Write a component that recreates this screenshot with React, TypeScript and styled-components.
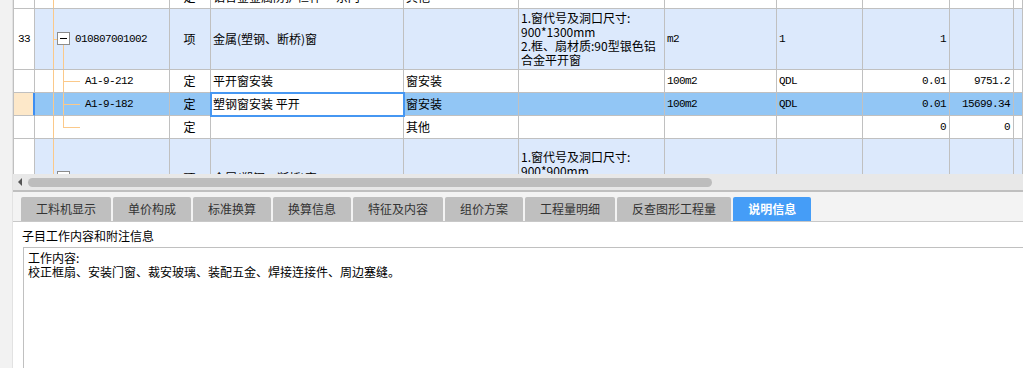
import React from 'react';
import styled, { createGlobalStyle } from 'styled-components';

const GlobalStyle = createGlobalStyle`
  html, body {
    margin: 0;
    padding: 0;
    background: #fff;
  }
  body {
    font-family: "Noto Sans CJK SC", "Liberation Sans", sans-serif;
    font-size: 12px;
    color: #000;
  }
`;

type Tone = 'plain' | 'item' | 'selected';
type TreeKind = 'none' | 'item' | 'child' | 'lastChild';

interface RowData {
    height: number;
    no: string;
    tone: Tone;
    tree: TreeKind;
    code: string;
    type: string;
    name: string;
    major: string;
    feature: string[];
    unit: string;
    expr: string;
    qty: string;
    price: string;
}

const rows: RowData[] = [
    {
        height: 23, no: '', tone: 'plain', tree: 'none', code: '', type: '定',
        name: '铝合金金属防护栏杆 一东门', major: '其他', feature: [], unit: '', expr: '1', qty: '', price: ''
    },
    {
        height: 61, no: '33', tone: 'item', tree: 'item', code: '010807001002', type: '项',
        name: '金属(塑钢、断桥)窗', major: '',
        feature: ['1.窗代号及洞口尺寸:', '900*1300mm', '2.框、扇材质:90型银色铝', '合金平开窗'],
        unit: 'm2', expr: '1', qty: '1', price: ''
    },
    {
        height: 23, no: '', tone: 'plain', tree: 'child', code: 'A1-9-212', type: '定',
        name: '平开窗安装', major: '窗安装', feature: [], unit: '100m2', expr: 'QDL', qty: '0.01', price: '9751.2'
    },
    {
        height: 23, no: '', tone: 'selected', tree: 'child', code: 'A1-9-182', type: '定',
        name: '塑钢窗安装 平开', major: '窗安装', feature: [], unit: '100m2', expr: 'QDL', qty: '0.01', price: '15699.34'
    },
    {
        height: 23, no: '', tone: 'plain', tree: 'lastChild', code: '', type: '定',
        name: '', major: '其他', feature: [], unit: '', expr: '', qty: '0', price: '0'
    },
    {
        height: 78, no: '34', tone: 'item', tree: 'item', code: '010807001003', type: '项',
        name: '金属(塑钢、断桥)窗', major: '',
        feature: ['1.窗代号及洞口尺寸:', '900*900mm', '2.框、扇材质:90型银色铝', '合金平开窗'],
        unit: 'm2', expr: '1', qty: '1', price: ''
    }
];

const tabs = ['工料机显示', '单价构成', '标准换算', '换算信息', '特征及内容', '组价方案', '工程量明细', '反查图形工程量', '说明信息'];

const toneBg: Record<Tone, string> = {
    plain: '#ffffff',
    item: '#dce9fc',
    selected: '#92c6f5'
};

const Page = styled.div`
  display: flex;
  width: 1023px;
  height: 368px;
  overflow: hidden;
`;

const SideStrip = styled.div`
  flex: none;
  width: 12px;
  background: #f2f2f2;
  border-right: 1px solid #e2e2e2;
`;

const Main = styled.div`
  flex: 1;
  min-width: 0;
  display: flex;
  flex-direction: column;
`;

const GridViewport = styled.div`
  height: 174px;
  overflow: hidden;
  border-left: 1px solid #c0c0c0;
  background: #fff;
`;

const GridBody = styled.div`
  margin-top: -14px;
`;

const Row = styled.div<{ $h: number }>`
  display: grid;
  grid-template-columns: 21px 135px 41px 193px 115px 146px 112px 86px 87px 64px 1fr;
  height: ${(p) => p.$h}px;
`;

const Cell = styled.div<{ $bg: string; $align?: 'left' | 'center' | 'right' }>`
  box-sizing: border-box;
  position: relative;
  display: flex;
  align-items: center;
  justify-content: ${(p) => (p.$align === 'right' ? 'flex-end' : p.$align === 'center' ? 'center' : 'flex-start')};
  padding: 0 3px 0 2px;
  border-right: 1px solid #c0c0c0;
  border-bottom: 1px solid #c0c0c0;
  background: ${(p) => p.$bg};
  line-height: 14px;
  white-space: nowrap;
  overflow: hidden;
`;

const NumberCell = styled(Cell)<{ $selected?: boolean }>`
  padding: 0;
  border-right-color: ${(p) => (p.$selected ? '#3d8ef2' : '#c0c0c0')};
  box-shadow: ${(p) => (p.$selected ? 'inset -1px 0 0 #3d8ef2' : 'none')};
`;

const EditCell = styled(Cell)`
  overflow: visible;
  z-index: 1;
  outline: 2px solid #4697f2;
  outline-offset: -1px;
`;

const TreeCell = styled(Cell)<{ $indent: number }>`
  padding-left: ${(p) => p.$indent}px;
`;

const FeatureText = styled.div`
  display: flex;
  flex-direction: column;
`;

const FeatureLine = styled.span`
  display: block;
  height: 14px;
  line-height: 14px;
`;

const Mono = styled.span`
  font-family: "Liberation Mono", "DejaVu Sans Mono", monospace;
  font-size: 11px;
  letter-spacing: -0.6px;
`;

const VLine = styled.span<{ $left: number; $half?: boolean }>`
  position: absolute;
  left: ${(p) => p.$left}px;
  top: 0;
  bottom: ${(p) => (p.$half ? '50%' : '0')};
  width: 1px;
  background: #fbc98a;
`;

const HLine = styled.span<{ $left: number; $w: number }>`
  position: absolute;
  left: ${(p) => p.$left}px;
  top: 50%;
  width: ${(p) => p.$w}px;
  height: 1px;
  background: #fbc98a;
`;

const DownLine = styled.span`
  position: absolute;
  left: 28px;
  top: calc(50% + 6px);
  bottom: 0;
  width: 1px;
  background: #fbc98a;
`;

const ExpandBox = styled.span`
  position: absolute;
  left: 22px;
  top: calc(50% - 7px);
  box-sizing: border-box;
  width: 13px;
  height: 13px;
  border: 1px solid #8c8c8c;
  background: #fff;
  display: flex;
  align-items: center;
  justify-content: center;

  &::after {
    content: '';
    width: 7px;
    height: 1px;
    background: #000;
  }
`;

const HScroll = styled.div`
  flex: none;
  height: 16px;
  background: #e8e8e8;
  display: flex;
  align-items: center;
  padding-left: 5px;
`;

const ScrollArrow = styled.span`
  width: 0;
  height: 0;
  border-top: 4px solid transparent;
  border-bottom: 4px solid transparent;
  border-right: 4px solid #555;
  margin-right: 6px;
`;

const ScrollThumb = styled.div`
  width: 684px;
  height: 9px;
  border-radius: 5px;
  background: #bdbdbd;
`;

const TabStrip = styled.div`
  flex: none;
  height: 29px;
  display: flex;
  align-items: flex-end;
  gap: 2px;
  padding-left: 8px;
  background: #f3f3f3;
  border-top: 2px solid #bfbfbf;
  border-bottom: 1px solid #c8c8c8;
`;

const Tab = styled.div<{ $active?: boolean }>`
  height: 24px;
  padding: 0 15px;
  display: flex;
  align-items: center;
  border-radius: 2px 2px 0 0;
  background: ${(p) => (p.$active ? '#459df7' : '#bfbfbf')};
  color: ${(p) => (p.$active ? '#fff' : '#333')};
  font-weight: ${(p) => (p.$active ? 700 : 400)};
  font-size: 12px;
  line-height: 14px;
  white-space: nowrap;
`;

const InfoLabel = styled.div`
  flex: none;
  height: 25px;
  box-sizing: border-box;
  padding: 7px 0 0 9px;
  line-height: 14px;
  color: #000;
`;

const InfoBox = styled.div`
  flex: 1;
  margin-left: 10px;
  padding: 3px 0 0 4px;
  border-top: 1px solid #c0c0c0;
  border-left: 1px solid #c0c0c0;
  line-height: 14px;
`;

const TreeDecor: React.FC<{ kind: TreeKind }> = ({ kind }) => (
    <>
        <VLine $left={18} />
        {kind === 'item' && (
            <>
                <HLine $left={18} $w={4} />
                <ExpandBox />
                <DownLine />
            </>
        )}
        {(kind === 'child' || kind === 'lastChild') && (
            <>
                <VLine $left={28} $half={kind === 'lastChild'} />
                <HLine $left={28} $w={17} />
            </>
        )}
    </>
);

const GridRow: React.FC<{ row: RowData }> = ({ row }) => {
    const bg = toneBg[row.tone];
    const selected = row.tone === 'selected';
    const NameCell = selected ? EditCell : Cell;

    return (
        <Row $h={row.height}>
            <NumberCell $bg={selected ? '#fde8c9' : '#fff'} $align="center" $selected={selected}>
                <Mono>{row.no}</Mono>
            </NumberCell>
            <TreeCell $bg={bg} $indent={row.tree === 'item' ? 40 : 50}>
                <TreeDecor kind={row.tree} />
                <Mono>{row.code}</Mono>
            </TreeCell>
            <Cell $bg={bg} $align="center">{row.type}</Cell>
            <NameCell $bg={selected ? '#fff' : bg}>{row.name}</NameCell>
            <Cell $bg={bg}>{row.major}</Cell>
            <Cell $bg={bg}>
                <FeatureText>
                    {row.feature.map((line) => (
                        <FeatureLine key={line}>{line}</FeatureLine>
                    ))}
                </FeatureText>
            </Cell>
            <Cell $bg={bg}><Mono>{row.unit}</Mono></Cell>
            <Cell $bg={bg}><Mono>{row.expr}</Mono></Cell>
            <Cell $bg={bg} $align="right"><Mono>{row.qty}</Mono></Cell>
            <Cell $bg={bg} $align="right"><Mono>{row.price}</Mono></Cell>
            <Cell $bg={bg} />
        </Row>
    );
};

const App: React.FC = () => (
    <>
        <GlobalStyle />
        <Page>
            <SideStrip />
            <Main>
                <GridViewport>
                    <GridBody>
                        {rows.map((row, i) => (
                            <GridRow key={i} row={row} />
                        ))}
                    </GridBody>
                </GridViewport>
                <HScroll>
                    <ScrollArrow />
                    <ScrollThumb />
                </HScroll>
                <TabStrip>
                    {tabs.map((t) => (
                        <Tab key={t} $active={t === '说明信息'}>{t}</Tab>
                    ))}
                </TabStrip>
                <InfoLabel>子目工作内容和附注信息</InfoLabel>
                <InfoBox>
                    <div>工作内容:</div>
                    <div>校正框扇、安装门窗、裁安玻璃、装配五金、焊接连接件、周边塞缝。</div>
                </InfoBox>
            </Main>
        </Page>
    </>
);

export default App;
